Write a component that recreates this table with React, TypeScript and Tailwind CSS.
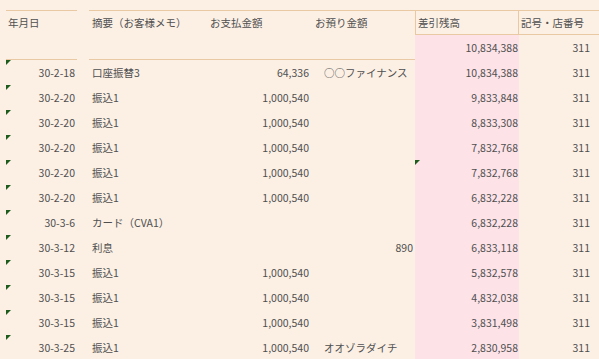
const rows = [
  { date: "30-2-18", memo: "口座振替3", pay: "64,336", note: "○○ファイナンス", dep: "", bal: "10,834,388" },
  { date: "30-2-20", memo: "振込1", pay: "1,000,540", note: "", dep: "", bal: "9,833,848" },
  { date: "30-2-20", memo: "振込1", pay: "1,000,540", note: "", dep: "", bal: "8,833,308" },
  { date: "30-2-20", memo: "振込1", pay: "1,000,540", note: "", dep: "", bal: "7,832,768" },
  { date: "30-2-20", memo: "振込1", pay: "1,000,540", note: "", dep: "", bal: "7,832,768", mark: true },
  { date: "30-2-20", memo: "振込1", pay: "1,000,540", note: "", dep: "", bal: "6,832,228" },
  { date: "30-3-6", memo: "カード（CVA1）", pay: "", note: "", dep: "", bal: "6,832,228" },
  { date: "30-3-12", memo: "利息", pay: "", note: "", dep: "890", bal: "6,833,118" },
  { date: "30-3-15", memo: "振込1", pay: "1,000,540", note: "", dep: "", bal: "5,832,578" },
  { date: "30-3-15", memo: "振込1", pay: "1,000,540", note: "", dep: "", bal: "4,832,038" },
  { date: "30-3-15", memo: "振込1", pay: "1,000,540", note: "", dep: "", bal: "3,831,498" },
  { date: "30-3-25", memo: "振込1", pay: "1,000,540", note: "オオゾラダイチ", dep: "", bal: "2,830,958" },
];

const Mark = () => (
  <svg className="absolute left-0 top-0" width="5" height="5" viewBox="0 0 5 5">
    <polygon points="0,0 5,0 0,5" fill="#1d5c1d" />
  </svg>
);

const App = () => {
  return (
    <div
      className="w-[599px] h-[359px] overflow-hidden bg-[#fcf0e5] text-[#4f4f4f] text-[10.5px] pt-[10px]"
      style={{ fontFamily: '"Noto Sans CJK JP", "Noto Sans", sans-serif' }}
    >
      <div className="grid grid-cols-[6px_71px_12px_118px_105px_103px_104px_80px] auto-rows-[25px]">
        {/* header */}
        <div className="row-span-2" />
        <div className="row-span-2 border-y border-[#e9c8a4] pl-[2px] leading-[24px]">年月日</div>
        <div className="row-span-2" />
        <div className="row-span-2 border-y border-[#e9c8a4] pl-[3px] leading-[24px]">摘要（お客様メモ）</div>
        <div className="row-span-2 border-y border-[#e9c8a4] pl-[3px] leading-[24px]">お支払金額</div>
        <div className="row-span-2 border-y border-[#e9c8a4] pl-[3px] leading-[24px]">お預り金額</div>
        <div className="border border-[#e9c8a4] pl-[2px] flex items-center">差引残高</div>
        <div className="border-y border-[#e9c8a4] pl-[2px] flex items-center">記号・店番号</div>
        <div className="bg-[#fde3e8] flex items-center justify-end pr-[1px]">10,834,388</div>
        <div className="flex items-center justify-end pr-[9px]">311</div>

        {rows.map((r, i) => (
          <div key={i} className="contents">
            <div />
            <div className="relative flex items-center justify-end pr-[2px]">
              <Mark />
              {r.date}
            </div>
            <div />
            <div className="flex items-center pl-[3px]">{r.memo}</div>
            <div className="flex items-center justify-end pr-[3px]">{r.pay}</div>
            <div className="flex items-center justify-between pl-[12px] pr-[2px]">
              <span>{r.note}</span>
              <span>{r.dep}</span>
            </div>
            <div className="relative bg-[#fde3e8] flex items-center justify-end pr-[1px]">
              {r.mark && <Mark />}
              {r.bal}
            </div>
            <div className="flex items-center justify-end pr-[9px]">311</div>
          </div>
        ))}
      </div>
    </div>
  );
};

export default App;
